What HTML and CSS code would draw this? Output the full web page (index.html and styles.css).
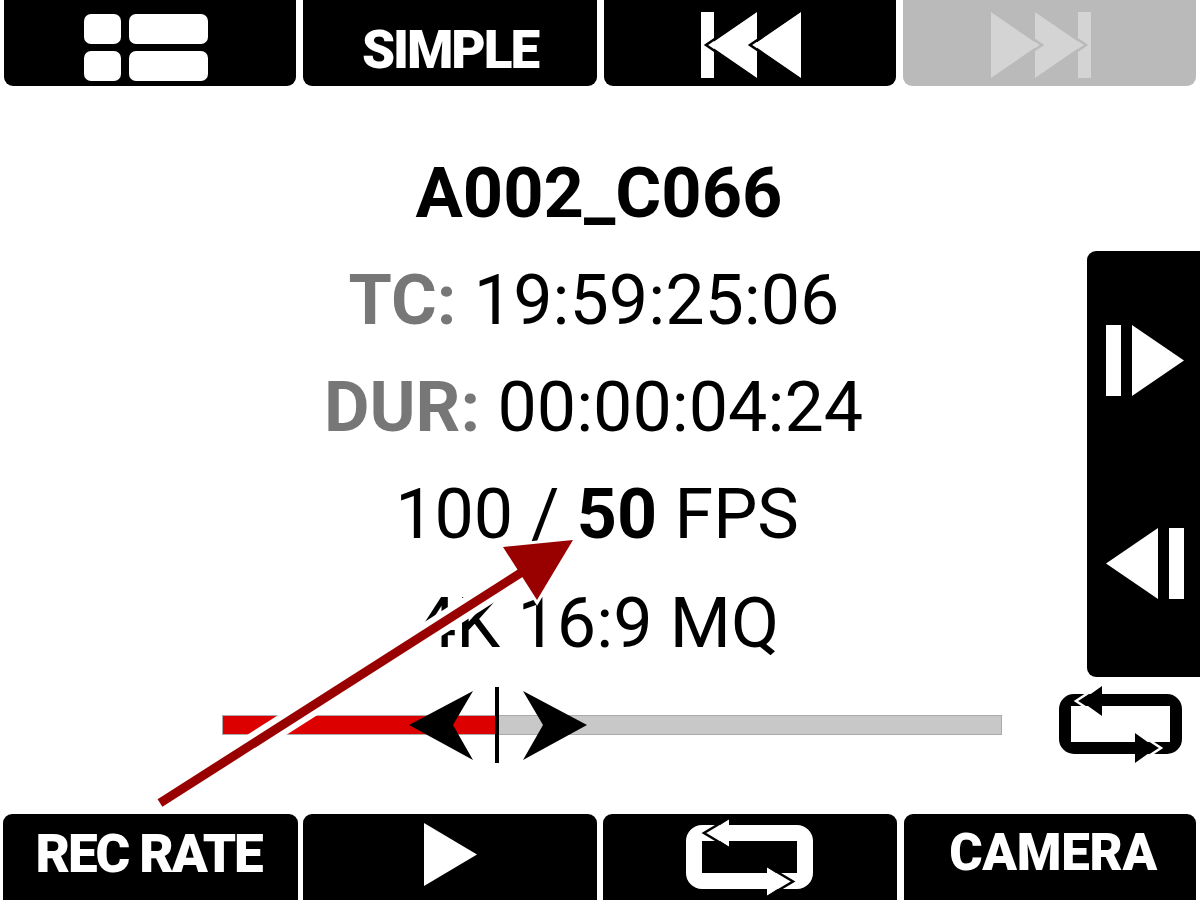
FILE: index.html
```html
<!DOCTYPE html>
<html lang="en">
<head>
  <meta charset="UTF-8" />
  <title>Clip playback</title>
  <link rel="stylesheet" href="styles.css">
</head>
<body>
  <div class="page">
    <header class="top-bar">
      <div class="btn">
        <svg class="icon icon-views" width="124" height="67" viewBox="0 0 124 67">
          <rect x="0" y="0" width="37" height="30" rx="7" fill="#fff"/>
          <rect x="45" y="0" width="79" height="30" rx="7" fill="#fff"/>
          <rect x="0" y="37" width="37" height="30" rx="7" fill="#fff"/>
          <rect x="45" y="37" width="79" height="30" rx="7" fill="#fff"/>
        </svg>
      </div>
      <div class="btn btn-label label-simple">SIMPLE</div>
      <div class="btn">
        <svg class="icon icon-prev" width="100" height="66" viewBox="0 0 100 66">
          <rect x="0" y="0" width="13" height="66" fill="#fff"/>
          <polygon points="56,0 56,66 8,33" fill="#fff"/>
          <polyline points="56,-2 5,33 56,68" fill="none" stroke="#000" stroke-width="2.5"/>
          <polygon points="100,0 100,66 52,33" fill="#fff"/>
          <polyline points="100,-2 49,33 100,68" fill="none" stroke="#000" stroke-width="2.5"/>
        </svg>
      </div>
      <div class="btn btn-off">
        <svg class="icon icon-next" width="100" height="66" viewBox="0 0 100 66">
          <rect x="87" y="0" width="13" height="66" fill="#d4d4d4"/>
          <polygon points="44,0 44,66 92,33" fill="#d4d4d4"/>
          <polyline points="44,-2 95,33 44,68" fill="none" stroke="#bababa" stroke-width="2.5"/>
          <polygon points="0,0 0,66 48,33" fill="#d4d4d4"/>
          <polyline points="0,-2 51,33 0,68" fill="none" stroke="#bababa" stroke-width="2.5"/>
        </svg>
      </div>
    </header>

    <main class="middle">
      <div class="upper">
        <section class="clip-info">
          <div class="clip-line clip-name">A002_C066</div>
          <div class="clip-line clip-tc"><b class="tag">TC:</b> 19:59:25:06</div>
          <div class="clip-line clip-dur"><b class="tag">DUR:</b> 00:00:04:24</div>
          <div class="clip-line clip-rate">100 / <b>50</b> FPS</div>
          <div class="clip-line clip-format">4K 16:9 MQ</div>
        </section>
        <aside class="side-panel">
          <svg width="78" height="71" viewBox="0 0 78 71">
            <rect x="0" y="0" width="15" height="71" fill="#fff"/>
            <polygon points="26,0 78,35.5 26,71" fill="#fff"/>
          </svg>
          <svg width="78" height="71" viewBox="0 0 78 71">
            <polygon points="52,0 0,35.5 52,71" fill="#fff"/>
            <rect x="63" y="0" width="15" height="71" fill="#fff"/>
          </svg>
        </aside>
      </div>

      <div class="lower">
        <div class="track">
          <div class="track-fill" style="width: 35.3%"></div>
          <svg class="thumb" width="178" height="76" viewBox="0 0 178 76">
            <polygon points="0,38 64,4 44,38 64,73" fill="#000"/>
            <rect x="86" y="0" width="4" height="76" fill="#000"/>
            <polygon points="114,4 178,38 114,73 134,38" fill="#000"/>
          </svg>
        </div>
        <svg class="loop-small" width="123" height="78" viewBox="0 0 123 78">
          <path fill-rule="evenodd" fill="#000" d="M15 8H108A15 15 0 0 1 123 23V53A15 15 0 0 1 108 68H15A15 15 0 0 1 0 53V23A15 15 0 0 1 15 8ZM12 20V56H111V20Z"/>
          <polygon points="43,0 43,30 22,15" fill="#000"/>
          <polyline points="43,-2 17,15 43,32" fill="none" stroke="#fff" stroke-width="2.5"/>
          <polygon points="76,47 76,77 97,62" fill="#000"/>
          <polyline points="76,45 102,62 76,79" fill="none" stroke="#fff" stroke-width="2.5"/>
        </svg>
      </div>
    </main>

    <footer class="bottom-bar">
      <div class="btn btn-label label-rec">REC RATE</div>
      <div class="btn">
        <svg class="icon icon-play" width="53" height="63" viewBox="0 0 53 63">
          <polygon points="0,0 53,31.5 0,63" fill="#fff"/>
        </svg>
      </div>
      <div class="btn">
        <svg class="icon icon-loop" width="127" height="77" viewBox="0 0 127 77">
          <path fill-rule="evenodd" fill="#fff" d="M16 6H111A16 16 0 0 1 127 22V54A16 16 0 0 1 111 70H16A16 16 0 0 1 0 54V22A16 16 0 0 1 16 6ZM16 22V54H111V22Z"/>
          <polygon points="43,0 43,28 22,14" fill="#fff"/>
          <polyline points="43,-1 18,14 43,29" fill="none" stroke="#000" stroke-width="2.5"/>
          <polygon points="81,48 81,77 103,62.5" fill="#fff"/>
          <polyline points="81,47 107,62.5 81,78" fill="none" stroke="#000" stroke-width="2.5"/>
        </svg>
      </div>
      <div class="btn btn-label label-camera">CAMERA</div>
    </footer>

    <svg class="pointer" width="1200" height="900" viewBox="0 0 1200 900">
      <line x1="160" y1="803" x2="538" y2="562" stroke="#fff" stroke-width="21"/>
      <polygon points="573,540 503,547 537,600" fill="#fff" stroke="#fff" stroke-width="6"/>
      <line x1="160" y1="803" x2="530" y2="567" stroke="#990000" stroke-width="9"/>
      <polygon points="573,540 503,547 537,600" fill="#990000"/>
    </svg>
  </div>
</body>
</html>
```

FILE: styles.css
```css
* {
  box-sizing: border-box;
}
body {
  margin: 0;
  font-family: Roboto, "Liberation Sans", sans-serif;
  background-color: #ffffff;
  color: #000000;
}
.page {
  position: relative;
  width: 1200px;
  height: 900px;
  display: flex;
  flex-direction: column;
  overflow: hidden;
}
.top-bar {
  height: 86px;
  display: grid;
  grid-template-columns: 292px 294px 292px 293px;
  column-gap: 7px;
  padding: 0 4px;
}
.bottom-bar {
  height: 86px;
  display: grid;
  grid-template-columns: 295px 294px 295px 294px;
  column-gap: 5px;
  padding-left: 3px;
}
.btn {
  display: flex;
  align-items: center;
  justify-content: center;
  background-color: #000000;
  color: #ffffff;
}
.top-bar .btn {
  border-radius: 0 0 9px 9px;
}
.bottom-bar .btn {
  border-radius: 9px 9px 0 0;
}
.bottom-bar .btn:nth-child(3) {
  margin-left: 1px;
}
.bottom-bar .btn:nth-child(4) {
  margin-left: 2px;
}
.btn-label {
  font-size: 53px;
  font-weight: 900;
  letter-spacing: -2.1px;
}
.label-simple {
  padding-top: 13px;
}
.label-rec {
  padding: 0 4px 6px 0;
}
.label-camera {
  padding: 0 0 10px 6px;
  font-size: 51px;
  letter-spacing: -0.3px;
}
.btn-off {
  background-color: #bababa;
}
.icon {
  display: block;
  overflow: visible;
}
.icon-views {
  margin: 9px 8px 0 0;
}
.icon-prev {
  margin: 4px 0 0 2px;
}
.icon-next {
  margin: 4px 18px 0 0;
}
.icon-play {
  margin-bottom: 5px;
}
.icon-loop {
  margin-right: 1px;
}
.middle {
  flex: 1;
  display: flex;
  flex-direction: column;
}
.upper {
  height: 600px;
  display: flex;
}
.clip-info {
  flex: 1;
  padding: 54px 0 0 109px;
  text-align: center;
  font-size: 70px;
  line-height: 107px;
}
.clip-line {
  white-space: nowrap;
}
.clip-name {
  padding-left: 2px;
  font-size: 70.4px;
  font-weight: 700;
}
.clip-tc {
  padding-right: 8px;
}
.clip-dur {
  padding-right: 9px;
}
.clip-rate {
  padding-right: 2px;
}
.clip-format {
  margin-top: 2px;
}
.tag {
  color: #777777;
}
.side-panel {
  width: 113px;
  height: 426px;
  margin-top: 165px;
  padding: 74px 0 78px 19px;
  display: flex;
  flex-direction: column;
  justify-content: space-between;
  background-color: #000000;
  border-radius: 9px 0 0 9px;
}
.lower {
  flex: 1;
  display: flex;
  align-items: flex-start;
  padding: 29px 0 0 222px;
}
.track {
  position: relative;
  width: 780px;
  height: 20px;
  background-color: #c8c8c8;
  border: 1px solid #aaaaaa;
}
.track-fill {
  height: 100%;
  background-color: #dc0000;
}
.thumb {
  position: absolute;
  left: 186px;
  top: -29px;
}
.loop-small {
  display: block;
  overflow: visible;
  margin: -29px 0 0 57px;
}
.pointer {
  position: absolute;
  left: 0;
  top: 0;
  pointer-events: none;
}
```
